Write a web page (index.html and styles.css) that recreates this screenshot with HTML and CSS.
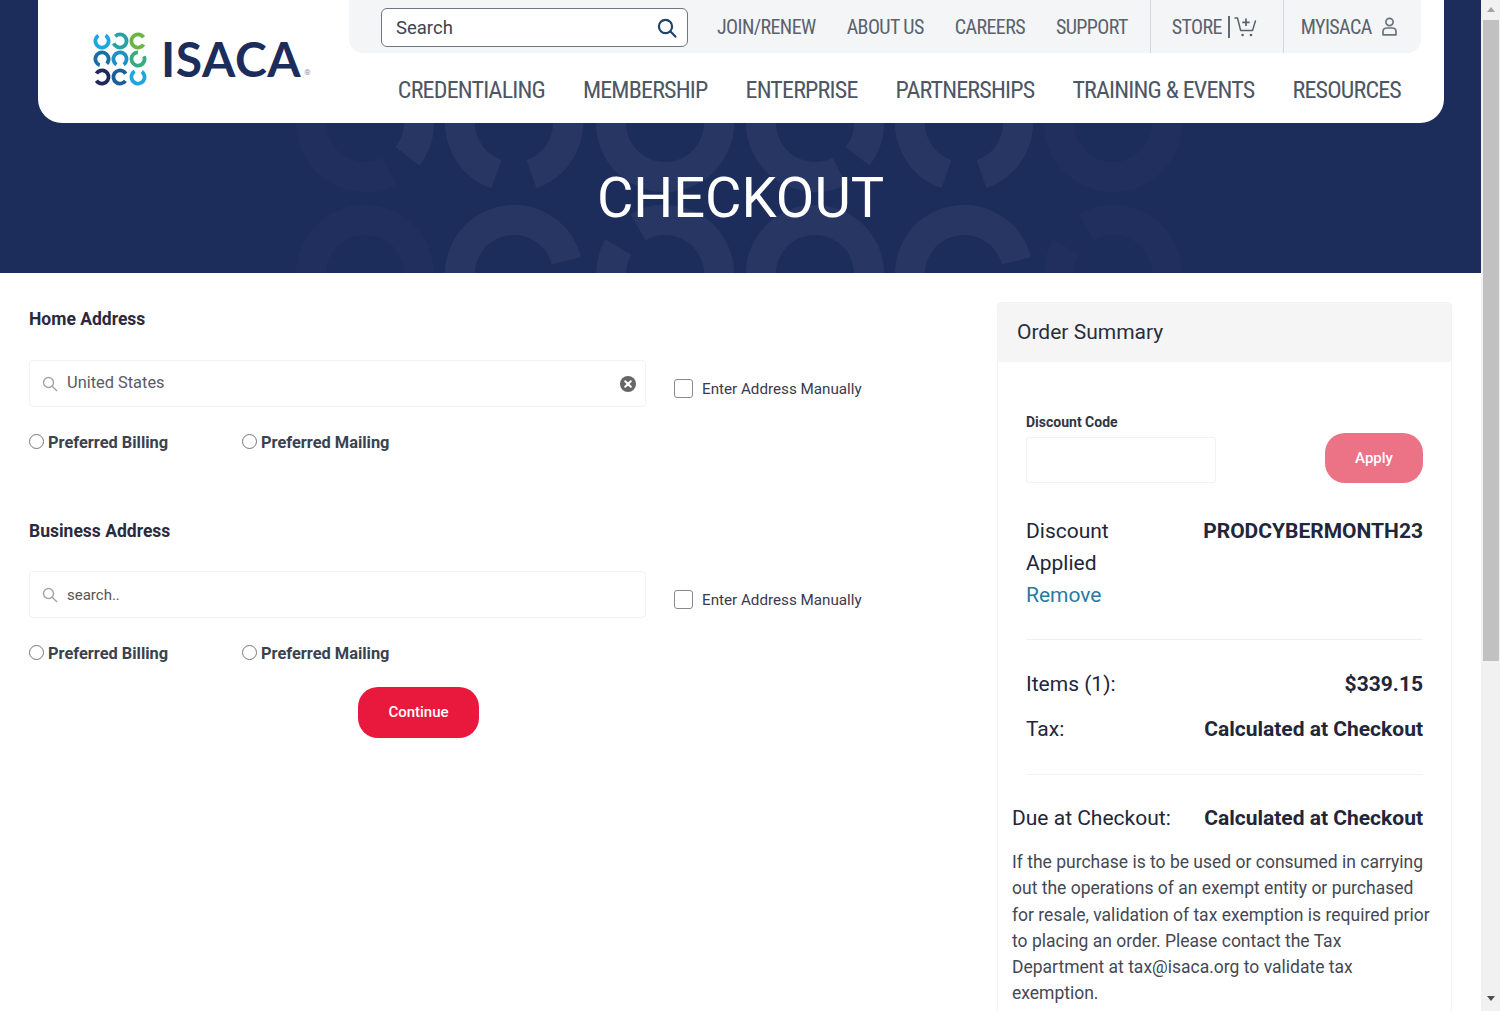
FILE: index.html
```html
<!DOCTYPE html>
<html lang="en">
<head>
<meta charset="UTF-8">
<meta name="viewport" content="width=device-width, initial-scale=1.0">
<title>Checkout</title>
<link rel="stylesheet" href="styles.css">
</head>
<body>
<div class="page">
    <section class="hero">
        <svg class="hero-rings" width="1481" height="273" viewBox="0 0 1481 273" fill="none">
            <g class="ring-on" stroke-width="30">
                <circle cx="514" cy="123" r="54" pathLength="360" stroke-dasharray="322 360" transform="rotate(109 514 123)"/>
                <circle cx="665" cy="123" r="54" pathLength="360" stroke-dasharray="300 360" transform="rotate(-60 665 123)"/>
                <circle cx="815" cy="123" r="54" pathLength="360" stroke-dasharray="78 360" transform="rotate(-40 815 123)"/>
                <circle cx="815" cy="123" r="54" pathLength="360" stroke-dasharray="150 360" transform="rotate(63 815 123)"/>
                <circle cx="964" cy="123" r="54" pathLength="360" stroke-dasharray="322 360" transform="rotate(109 964 123)"/>
                <circle cx="365" cy="123" r="54" pathLength="360" stroke-dasharray="78 360" transform="rotate(-40 365 123)"/>
                <circle cx="514" cy="274" r="54" pathLength="360" stroke-dasharray="226 360" transform="rotate(120 514 274)"/>
                <circle cx="665" cy="274" r="54" pathLength="360" stroke-dasharray="120 360" transform="rotate(90 665 274)"/>
                <circle cx="665" cy="274" r="54" pathLength="360" stroke-dasharray="180 360" transform="rotate(240 665 274)"/>
                <circle cx="815" cy="274" r="54" pathLength="360" stroke-dasharray="200 360" transform="rotate(170 815 274)"/>
                <circle cx="964" cy="274" r="54" pathLength="360" stroke-dasharray="226 360" transform="rotate(120 964 274)"/>
            </g>
            <g class="ring-dim" stroke-width="30">
                <circle cx="365" cy="123" r="54" pathLength="360" stroke-dasharray="150 360" transform="rotate(63 365 123)"/>
                <circle cx="1113" cy="123" r="54" pathLength="360" stroke-dasharray="300 360" transform="rotate(-60 1113 123)"/>
                <circle cx="365" cy="274" r="54" pathLength="360" stroke-dasharray="200 360" transform="rotate(170 365 274)"/>
                <circle cx="1113" cy="274" r="54" pathLength="360" stroke-dasharray="120 360" transform="rotate(90 1113 274)"/>
                <circle cx="1113" cy="274" r="54" pathLength="360" stroke-dasharray="180 360" transform="rotate(240 1113 274)"/>
            </g>
        </svg>

        <header class="site-header">
            <a class="logo" href="#">
                <svg class="logo-mark" width="56" height="56" viewBox="0 0 56 56" fill="none" stroke-width="3.8">
                    <circle cx="9" cy="9" r="6.6" stroke="#1ea7de" pathLength="360" stroke-dasharray="295 360" transform="rotate(302 9 9)"/>
                    <circle cx="27" cy="9" r="6.6" stroke="#28a1a8" pathLength="360" stroke-dasharray="295 360" transform="rotate(225 27 9)"/>
                    <circle cx="45" cy="9" r="6.6" stroke="#6ab546" pathLength="360" stroke-dasharray="295 360" transform="rotate(32 45 9)"/>
                    <circle cx="9" cy="27" r="6.6" stroke="#1a6fa0" pathLength="360" stroke-dasharray="295 360" transform="rotate(110 9 27)"/>
                    <circle cx="27" cy="27" r="6.6" stroke="#1e90c8" pathLength="360" stroke-dasharray="295 360" transform="rotate(122 27 27)"/>
                    <circle cx="45" cy="27" r="6.6" stroke="#35ad80" pathLength="360" stroke-dasharray="295 360" transform="rotate(335 45 27)"/>
                    <circle cx="9" cy="45" r="6.6" stroke="#1f2a5c" pathLength="360" stroke-dasharray="295 360" transform="rotate(212 9 45)"/>
                    <circle cx="27" cy="45" r="6.6" stroke="#1c5f96" pathLength="360" stroke-dasharray="295 360" transform="rotate(35 27 45)"/>
                    <circle cx="45" cy="45" r="6.6" stroke="#1ea7de" pathLength="360" stroke-dasharray="295 360" transform="rotate(305 45 45)"/>
                </svg>
                <span class="logo-name">ISACA</span><span class="logo-reg">&reg;</span>
            </a>

            <div class="header-right">
                <div class="top-bar">
                    <div class="site-search">
                        <span>Search</span>
                        <svg width="20" height="20" viewBox="0 0 20 20" fill="none" stroke="#1d4468" stroke-width="2.2">
                            <circle cx="8.5" cy="8.5" r="6.6"/>
                            <path d="M13.5 13.5 18.4 18.6" stroke-linecap="round"/>
                        </svg>
                    </div>
                    <nav class="top-links">
                        <a href="#">JOIN/RENEW</a>
                        <a href="#">ABOUT US</a>
                        <a href="#">CAREERS</a>
                        <a href="#">SUPPORT</a>
                    </nav>
                    <a class="top-cell store-cell" href="#">
                        STORE
                        <svg width="29" height="24" viewBox="0 0 29 24" fill="none" stroke="#59626e" stroke-width="1.5">
                            <path d="M1 1V23" stroke="#3f4753" stroke-width="1.6"/>
                            <path d="M7 3H9.5L12.6 15.4H24.6L27.4 6" stroke-linecap="round" stroke-linejoin="round"/>
                            <path d="M18 3.6V11M14.3 7.3H21.7" stroke-width="1.7"/>
                            <circle cx="14.6" cy="20" r="1.3" fill="#59626e" stroke="none"/>
                            <circle cx="23" cy="20" r="1.3" fill="#59626e" stroke="none"/>
                        </svg>
                    </a>
                    <a class="top-cell account-cell" href="#">
                        MYISACA
                        <svg width="15" height="19" viewBox="0 0 15 19" fill="none" stroke="#6b7480" stroke-width="1.7">
                            <circle cx="7.5" cy="5" r="3.6"/>
                            <path d="M1 17.8V14.6C1 12.4 2.8 11 5 11H10C12.2 11 14 12.4 14 14.6V17.8Z" stroke-linejoin="round"/>
                        </svg>
                    </a>
                </div>
                <nav class="main-nav">
                    <a href="#">CREDENTIALING</a>
                    <a href="#">MEMBERSHIP</a>
                    <a href="#">ENTERPRISE</a>
                    <a href="#">PARTNERSHIPS</a>
                    <a href="#">TRAINING &amp; EVENTS</a>
                    <a href="#">RESOURCES</a>
                </nav>
            </div>
        </header>

        <h1 class="hero-title">CHECKOUT</h1>
    </section>

    <main class="checkout">
        <div class="address-col">
            <form>
                <h2 class="address-title">Home Address</h2>
                <div class="address-row">
                    <div class="address-field">
                        <svg class="field-icon" width="16" height="16" viewBox="0 0 16 16" fill="none" stroke="#a3a3a3" stroke-width="1.4">
                            <circle cx="6.5" cy="6.5" r="5"/>
                            <path d="M10.2 10.2 15 15"/>
                        </svg>
                        <span class="field-value">United States</span>
                        <svg class="field-clear" width="16" height="16" viewBox="0 0 16 16">
                            <circle cx="8" cy="8" r="8" fill="#666"/>
                            <path d="M5.2 5.2 10.8 10.8M10.8 5.2 5.2 10.8" stroke="#fff" stroke-width="2" stroke-linecap="round"/>
                        </svg>
                    </div>
                    <label class="manual-check"><input type="checkbox"> Enter Address Manually</label>
                </div>
                <div class="preferred-row">
                    <label class="preferred-item"><input type="radio" name="homeBilling"> Preferred Billing</label>
                    <label class="preferred-item"><input type="radio" name="homeMailing"> Preferred Mailing</label>
                </div>

                <h2 class="address-title business-title">Business Address</h2>
                <div class="address-row">
                    <div class="address-field">
                        <svg class="field-icon" width="16" height="16" viewBox="0 0 16 16" fill="none" stroke="#a3a3a3" stroke-width="1.4">
                            <circle cx="6.5" cy="6.5" r="5"/>
                            <path d="M10.2 10.2 15 15"/>
                        </svg>
                        <span class="field-hint">search..</span>
                    </div>
                    <label class="manual-check"><input type="checkbox"> Enter Address Manually</label>
                </div>
                <div class="preferred-row">
                    <label class="preferred-item"><input type="radio" name="busBilling"> Preferred Billing</label>
                    <label class="preferred-item"><input type="radio" name="busMailing"> Preferred Mailing</label>
                </div>

                <div class="continue-row">
                    <button type="button" class="continue-button">Continue</button>
                </div>
            </form>
        </div>

        <aside class="order-card">
            <h2 class="order-head">Order Summary</h2>
            <div class="order-body">
                <div class="order-inset">
                    <div class="discount-form">
                        <div>
                            <label class="discount-label" for="discountCode">Discount Code</label>
                            <input class="discount-input" type="text" id="discountCode">
                        </div>
                        <button type="button" class="apply-button">Apply</button>
                    </div>

                    <div class="discount-applied">
                        <div>
                            Discount<br>Applied<br>
                            <a class="remove-link" href="#">Remove</a>
                        </div>
                        <strong>PRODCYBERMONTH23</strong>
                    </div>

                    <div class="totals">
                        <div class="total-row"><span>Items (1):</span><strong>$339.15</strong></div>
                        <div class="total-row"><span>Tax:</span><strong>Calculated at Checkout</strong></div>
                    </div>
                </div>

                <div class="total-row due-row"><span>Due at Checkout:</span><strong>Calculated at Checkout</strong></div>
                <p class="tax-note">If the purchase is to be used or consumed in carrying out the operations of an exempt entity or purchased for resale, validation of tax exemption is required prior to placing an order. Please contact the Tax Department at tax@isaca.org to validate tax exemption.</p>
            </div>
        </aside>
    </main>
</div>

<div class="scroll-rail">
    <span class="scroll-arrow scroll-up"></span>
    <span class="scroll-thumb"></span>
    <span class="scroll-arrow scroll-down"></span>
</div>
</body>
</html>
```

FILE: styles.css
```css
html, body {
    height: 100%;
}
body {
    display: flex;
    margin: 0;
    overflow: hidden;
    font-family: Roboto, "Liberation Sans", sans-serif;
    color: #22263a;
    background-color: #fff;
}
a {
    color: inherit;
    text-decoration: none;
}
.page {
    flex: 1;
    min-width: 0;
    height: 1011px;
    overflow: hidden;
}

/* hero + header */
.hero {
    position: relative;
    height: 273px;
    padding: 0 37px 0 38px;
    box-sizing: border-box;
    background-color: #1c2d5c;
}
.hero-rings {
    position: absolute;
    left: 0;
    top: 0;
}
.ring-on {
    stroke: #283663;
}
.ring-dim {
    stroke: #212f5e;
}
.site-header {
    position: relative;
    display: flex;
    height: 123px;
    background-color: #fff;
    border-radius: 0 0 24px 24px;
}
.logo {
    display: flex;
    align-items: flex-start;
    flex: 0 0 311px;
    padding: 32px 0 0 55px;
    box-sizing: border-box;
    color: #1c2d5c;
}
.logo-mark {
    flex-shrink: 0;
}
.logo-name {
    margin: -2px 0 0 12px;
    font-family: Lato, sans-serif;
    font-size: 48px;
    font-weight: 700;
    letter-spacing: 0.6px;
    line-height: 58px;
}
.logo-reg {
    margin: 36px 0 0 3px;
    font-size: 8px;
    color: #8a93a8;
}
.header-right {
    flex: 1;
    margin-right: 23px;
}
.top-bar {
    display: flex;
    align-items: stretch;
    height: 53px;
    padding-left: 32px;
    background-color: #f4f5f7;
    border-radius: 0 0 14px 14px;
}
.site-search {
    display: flex;
    align-items: center;
    justify-content: space-between;
    flex-shrink: 0;
    width: 307px;
    height: 39px;
    margin-top: 8px;
    padding: 0 10px 0 14px;
    box-sizing: border-box;
    font-size: 18.5px;
    color: #3d4450;
    background-color: #fff;
    border: 1px solid #6f7682;
    border-radius: 6px;
}
.top-links {
    display: flex;
    align-items: center;
    gap: 31px;
    margin-left: 29px;
    padding-right: 22px;
    font-size: 20px;
    font-stretch: 75%;
    letter-spacing: -0.6px;
    white-space: nowrap;
    color: #59626e;
}
.top-cell {
    display: flex;
    align-items: center;
    flex-shrink: 0;
    font-size: 20px;
    font-stretch: 75%;
    letter-spacing: -0.6px;
    color: #59626e;
    border-left: 1px solid #d3d5d9;
}
.store-cell {
    gap: 6px;
    width: 133px;
    padding-left: 21px;
    box-sizing: border-box;
}
.account-cell {
    gap: 10px;
    padding-left: 17px;
}
.main-nav {
    display: flex;
    justify-content: flex-end;
    gap: 38px;
    margin-top: 23px;
    padding-right: 20px;
    font-size: 24px;
    line-height: 28px;
    font-stretch: 75%;
    letter-spacing: -0.8px;
    white-space: nowrap;
    color: #4d5664;
}
.hero-title {
    position: relative;
    margin: 14px 0 0 -38px;
    width: 1481px;
    font-size: 56px;
    font-weight: 400;
    line-height: 122px;
    text-align: center;
    color: #fff;
}

/* checkout */
.checkout {
    display: flex;
    justify-content: space-between;
    padding: 0 29px;
}
.address-col {
    width: 779px;
    padding-top: 36px;
}
.address-title {
    margin: 0 0 31px;
    font-size: 17.5px;
    font-weight: 700;
    line-height: 20px;
    color: #2a2a3c;
}
.business-title {
    margin-top: 68px;
    margin-bottom: 30px;
}
.address-row {
    display: flex;
    align-items: flex-start;
    gap: 28px;
}
.address-field {
    display: flex;
    align-items: center;
    flex-shrink: 0;
    width: 617px;
    height: 47px;
    padding: 0 9px 0 12px;
    box-sizing: border-box;
    background-color: #fff;
    border: 1px solid #f2f2f2;
    border-radius: 4px;
}
.field-icon {
    flex-shrink: 0;
    margin-right: 9px;
}
.field-value {
    flex: 1;
    margin-top: -2px;
    font-size: 16.4px;
    color: #5a5a66;
}
.field-hint {
    font-size: 15px;
    color: #555;
}
.manual-check {
    display: flex;
    align-items: center;
    gap: 9px;
    margin-top: 20px;
    font-size: 15.2px;
    line-height: 19px;
    white-space: nowrap;
    color: #3a3a4c;
}
.manual-check input {
    appearance: none;
    flex-shrink: 0;
    width: 19px;
    height: 19px;
    margin: -2px 0 0;
    background-color: #fff;
    border: 1px solid #8a8a8a;
    border-radius: 3px;
}
.preferred-row {
    display: flex;
    margin-top: 26px;
}
.preferred-item {
    display: flex;
    align-items: center;
    gap: 4px;
    width: 213px;
    font-size: 16.4px;
    font-weight: 700;
    line-height: 20px;
    color: #3a4250;
}
.preferred-item input {
    width: 15px;
    height: 15px;
    margin: -4px 0 0;
}
.continue-row {
    display: flex;
    justify-content: center;
    margin-top: 23px;
}
.continue-button, .apply-button {
    font-family: inherit;
    font-weight: 500;
    color: #fff;
    border: none;
    border-radius: 20px;
    cursor: pointer;
}
.continue-button {
    width: 121px;
    height: 51px;
    padding-bottom: 3px;
    font-size: 15px;
    background-color: #e8193c;
}

/* order summary */
.order-card {
    flex-shrink: 0;
    width: 455px;
    min-height: 800px;
    margin-top: 29px;
    box-sizing: border-box;
    border: 1px solid #f2f2f2;
    border-radius: 4px 4px 0 0;
}
.order-head {
    height: 59px;
    margin: 0;
    padding-left: 19px;
    font-size: 21px;
    font-weight: 400;
    line-height: 58px;
    color: #2a2e3c;
    background-color: #f5f5f5;
}
.order-body {
    padding: 0 12px 0 14px;
}
.order-inset {
    padding: 52px 16px 0 14px;
}
.discount-form {
    display: flex;
    justify-content: space-between;
    align-items: flex-end;
}
.discount-label {
    display: block;
    margin-bottom: 7px;
    font-size: 14px;
    font-weight: 700;
    line-height: 16px;
    color: #33343f;
}
.discount-input {
    display: block;
    width: 190px;
    height: 46px;
    box-sizing: border-box;
    border: 1px solid #f2f2f2;
    border-radius: 2px;
}
.apply-button {
    width: 98px;
    height: 50px;
    font-size: 15px;
    background-color: #ec7286;
}
.discount-applied {
    display: flex;
    justify-content: space-between;
    margin-top: 32px;
    padding-bottom: 28px;
    font-size: 21px;
    line-height: 32px;
    border-bottom: 1px solid #f0f0f0;
}
.remove-link {
    color: #2a7aa5;
}
.totals {
    padding: 28px 0 29px;
    border-bottom: 1px solid #f0f0f0;
}
.total-row {
    display: flex;
    justify-content: space-between;
    font-size: 21px;
    line-height: 32px;
}
.total-row + .total-row {
    margin-top: 13px;
}
.due-row {
    margin-top: 27px;
    padding-right: 16px;
}
.tax-note {
    width: 422px;
    margin: 15px 0 0;
    font-size: 17.5px;
    line-height: 26.3px;
    color: #444854;
}

/* browser scrollbar in the shot */
.scroll-rail {
    display: flex;
    flex-direction: column;
    align-items: center;
    flex: 0 0 19px;
    height: 1011px;
    background-color: #f1f1f1;
}
.scroll-arrow {
    width: 0;
    height: 0;
    border-left: 4px solid transparent;
    border-right: 4px solid transparent;
}
.scroll-up {
    margin: 7px 0 8px;
    border-bottom: 5px solid #a3a3a3;
}
.scroll-down {
    margin-top: 335px;
    border-top: 5px solid #505050;
}
.scroll-thumb {
    width: 16px;
    height: 641px;
    background-color: #c1c1c1;
}
```
